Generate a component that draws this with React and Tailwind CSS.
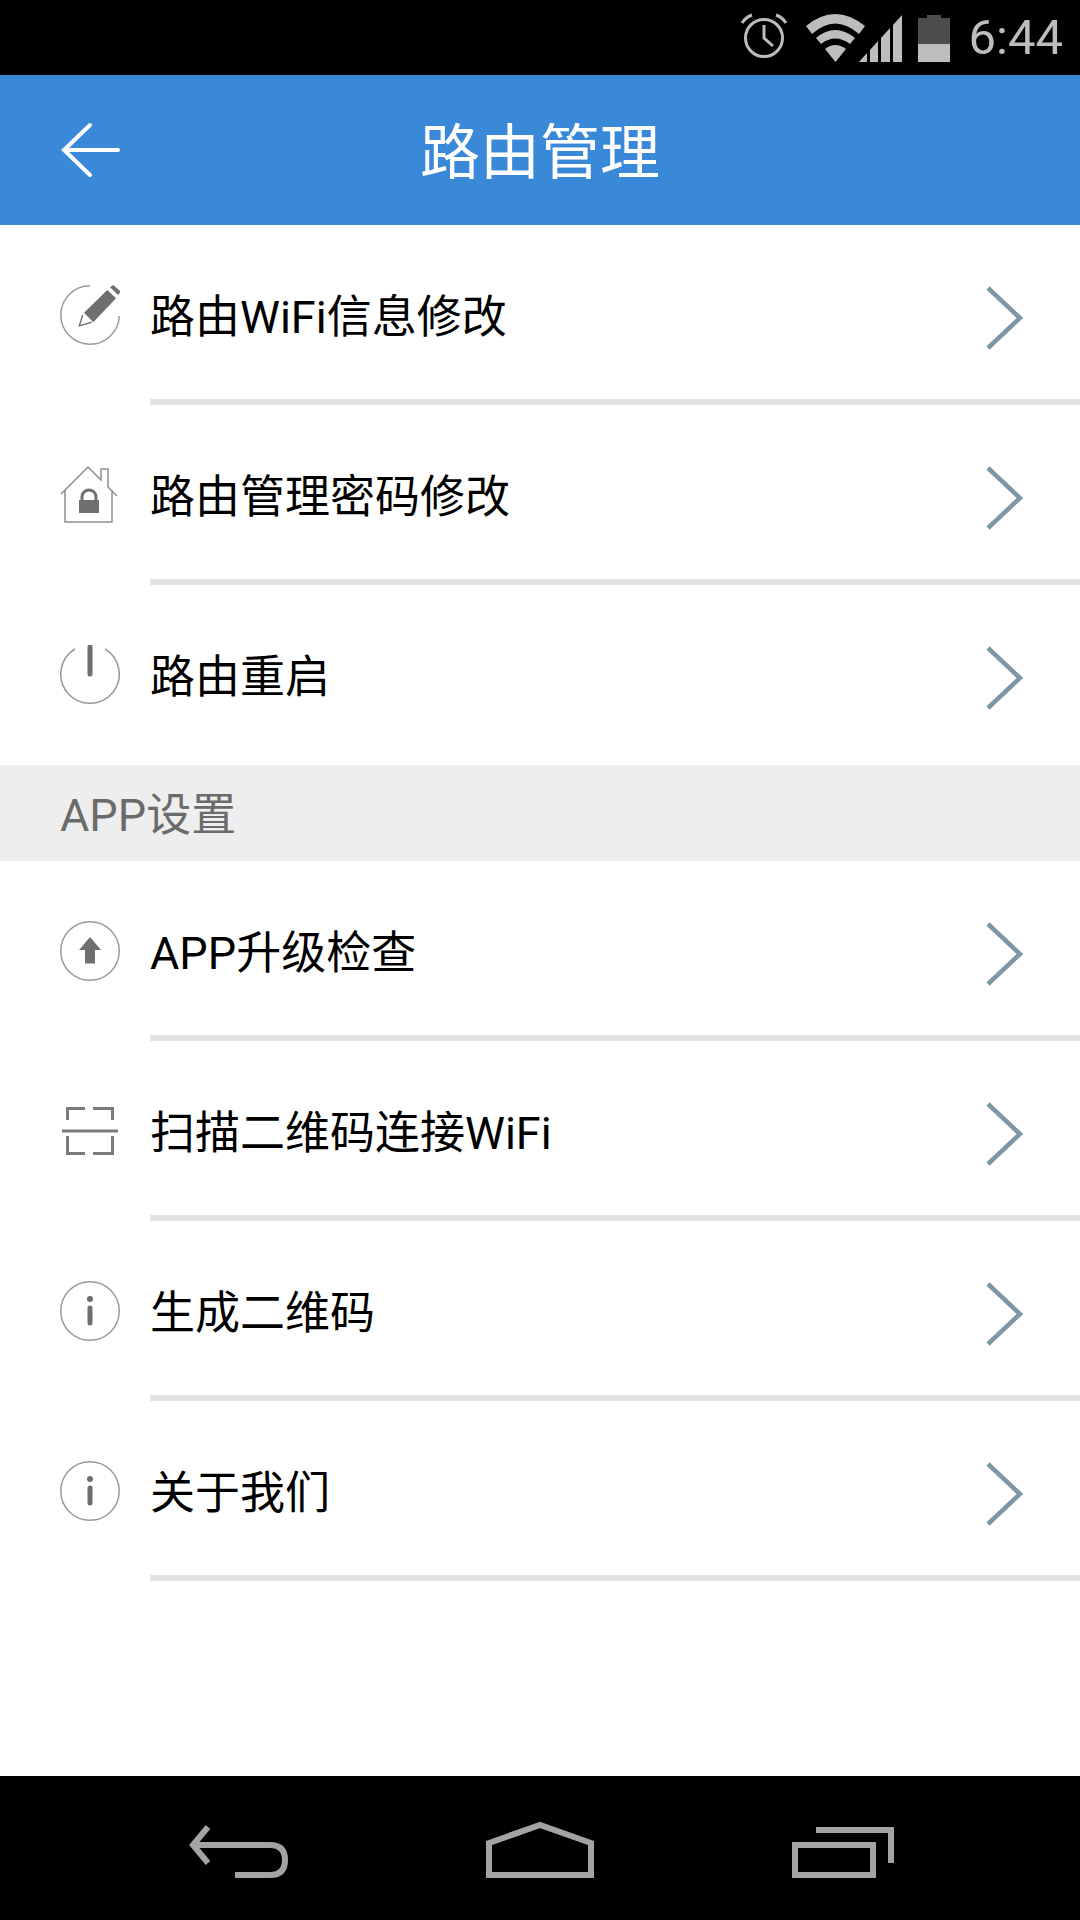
const font = { fontFamily: 'Roboto, "Noto Sans CJK SC", sans-serif' };

function StatusIcons() {
  return (
    <div className="flex items-center gap-0">
      <svg width="60" height="60" viewBox="0 0 60 60" fill="none" stroke="#bdbdbd" strokeWidth="3">
        <circle cx="30" cy="30" r="18.500" />
        <path d="M30 17V30L39 38" />
        <path d="M8 15Q12 9 18 7M42 7Q48 9 52 15" />
      </svg>
      <svg className="ml-[12px]" width="60" height="60" viewBox="0 0 60 60" fill="#bdbdbd">
        <path d="M0 18Q29 -6 59 18L53 26Q29 5 6 26Z" />
        <path d="M10 30Q29 14 49 30L44 36Q29 25 15 36Z" />
        <path d="M19 41Q29 33 40 41L29.500 54Z" />
      </svg>
      <svg className="ml-[-7px]" width="44" height="60" viewBox="0 0 44 60" fill="#bdbdbd">
        <path d="M0 54L8 45V54Z" />
        <path d="M11 42L19 33V54H11Z" />
        <path d="M22 30L31 20V54H22Z" />
        <path d="M34 17L43 7V54H34Z" />
      </svg>
      <svg className="ml-[15px]" width="32" height="60" viewBox="0 0 32 60">
        <path d="M0 10H9V7H23V10H32V36H0Z" fill="#4d4d4d" />
        <path d="M0 36H32V54H0Z" fill="#bdbdbd" />
      </svg>
      <span className="ml-[19px] mr-[17px] text-[49px] leading-none font-normal text-[#bdbdbd]">6:44</span>
    </div>
  );
}

function PencilIcon() {
  return (
    <svg width="60" height="60" viewBox="0 0 60 60" fill="none">
      <path d="M30 0.750A29.250 29.250 0 1 0 59.250 31" stroke="#9a9a9a" strokeWidth="1.500" />
      <path d="M24 27.700L47.300 5L56 13.300L33.300 37.300Z" fill="#6f6f6f" />
      <path d="M50 2.300L53.300 0L60.700 6.700L58 10Z" fill="#6f6f6f" />
      <path d="M22.700 30L19.300 41L31.700 37.300" stroke="#7a7a7a" strokeWidth="1.500" />
    </svg>
  );
}

function HouseLockIcon() {
  return (
    <svg width="60" height="60" viewBox="0 0 60 60" fill="none">
      <path d="M1 29L28 2L41 15V4H48V22L57 31M5 25V57H52V25" stroke="#8e8e8e" strokeWidth="1.500" />
      <path d="M19 35H39V48H19Z" fill="#6f6f6f" />
      <path d="M22 35V32A7 7 0 0 1 36 32V35" stroke="#6f6f6f" strokeWidth="3" />
    </svg>
  );
}

function PowerIcon() {
  return (
    <svg width="60" height="60" viewBox="0 0 60 60" fill="none">
      <path d="M15 4A29.250 29.250 0 1 0 45 4" stroke="#9a9a9a" strokeWidth="1.500" />
      <path d="M30 2V29" stroke="#6f6f6f" strokeWidth="5" strokeLinecap="round" />
    </svg>
  );
}

function UpgradeIcon() {
  return (
    <svg width="60" height="60" viewBox="0 0 60 60" fill="none">
      <circle cx="30" cy="30" r="29.250" stroke="#9a9a9a" strokeWidth="1.500" />
      <path d="M30 16L41 29H35V42.500H25V29H19Z" fill="#6f6f6f" />
    </svg>
  );
}

function ScanIcon() {
  return (
    <svg width="60" height="60" viewBox="0 0 60 60" fill="none" stroke="#7a7a7a" strokeWidth="3">
      <path d="M25 7.500H7.500V19M33 7.500H52.500V19M7.500 35V52.500H25M52.500 35V52.500H33" />
      <path d="M2 30H58" />
    </svg>
  );
}

function InfoIcon() {
  return (
    <svg width="60" height="60" viewBox="0 0 60 60" fill="none">
      <circle cx="30" cy="30" r="29.250" stroke="#9a9a9a" strokeWidth="1.500" />
      <circle cx="30" cy="18" r="3" fill="#6f6f6f" />
      <path d="M30 27V42" stroke="#6f6f6f" strokeWidth="5" strokeLinecap="round" />
    </svg>
  );
}

function Chevron() {
  return (
    <svg className="mt-[6px]" width="40" height="70" viewBox="0 0 40 70" fill="none">
      <path d="M2 5L34 35L2 65" stroke="#7f97a5" strokeWidth="4.500" style={{ filter: "blur(0.6px)" }} />
    </svg>
  );
}

function Row({ icon, label, noDivider }) {
  return (
    <div>
      <div className="flex h-[174px] items-center pl-[60px] pr-[54px] pt-[6px]">
        <div className="w-[90px] shrink-0">{icon}</div>
        <span className="flex-1 pt-[5px] text-[45px] leading-none text-black">{label}</span>
        <Chevron />
      </div>
      <div className={noDivider ? "h-[6px]" : "ml-[150px] h-[6px] bg-[#e2e3e5]"} />
    </div>
  );
}

export default function App() {
  return (
    <div className="flex h-[1920px] w-[1080px] flex-col overflow-hidden bg-white" style={font}>
      <div className="flex h-[75px] items-center justify-end bg-black">
        <StatusIcons />
      </div>

      <header className="flex h-[150px] items-center bg-[#3a89d8]">
        <div className="w-[150px] pl-[60px]">
          <svg width="62" height="56" viewBox="0 0 62 56" fill="none" stroke="#fff" strokeWidth="4" strokeLinecap="round">
            <path d="M30 3L4 28L30 53M4 28H58" />
          </svg>
        </div>
        <h1 className="flex-1 pt-[7px] text-center text-[60px] leading-none font-normal text-white">路由管理</h1>
        <div className="w-[150px]" />
      </header>

      <Row icon={<PencilIcon />} label="路由WiFi信息修改" />
      <Row icon={<HouseLockIcon />} label="路由管理密码修改" />
      <Row icon={<PowerIcon />} label="路由重启" noDivider />

      <div className="flex h-[96px] items-center bg-[#eeeeee] pl-[60px] pt-[5px] text-[45px] leading-none text-[#6b6b6b]">
        APP设置
      </div>

      <Row icon={<UpgradeIcon />} label="APP升级检查" />
      <Row icon={<ScanIcon />} label="扫描二维码连接WiFi" />
      <Row icon={<InfoIcon />} label="生成二维码" />
      <Row icon={<InfoIcon />} label="关于我们" />

      <div className="flex-1" />

      <nav className="flex h-[144px] justify-center bg-black pt-[44px]">
        <div className="flex w-[302px] justify-center">
          <svg width="120" height="60" viewBox="0 0 120 60" fill="none" stroke="#a3a3a3" strokeWidth="6">
            <path d="M30 7L15 25L30 43M17 25H92Q107 25 107 40Q107 55 92 55H57" />
          </svg>
        </div>
        <div className="flex w-[302px] justify-center">
          <svg width="120" height="60" viewBox="0 0 120 60" fill="none" stroke="#a3a3a3" strokeWidth="6">
            <path d="M9 55H111V23L60 5L9 23Z" />
          </svg>
        </div>
        <div className="flex w-[302px] justify-center">
          <svg width="120" height="60" viewBox="0 0 120 60" fill="none" stroke="#a3a3a3" strokeWidth="6">
            <path d="M13 25H91V55H13Z" />
            <path d="M34 10H109V43" />
          </svg>
        </div>
      </nav>
    </div>
  );
}
